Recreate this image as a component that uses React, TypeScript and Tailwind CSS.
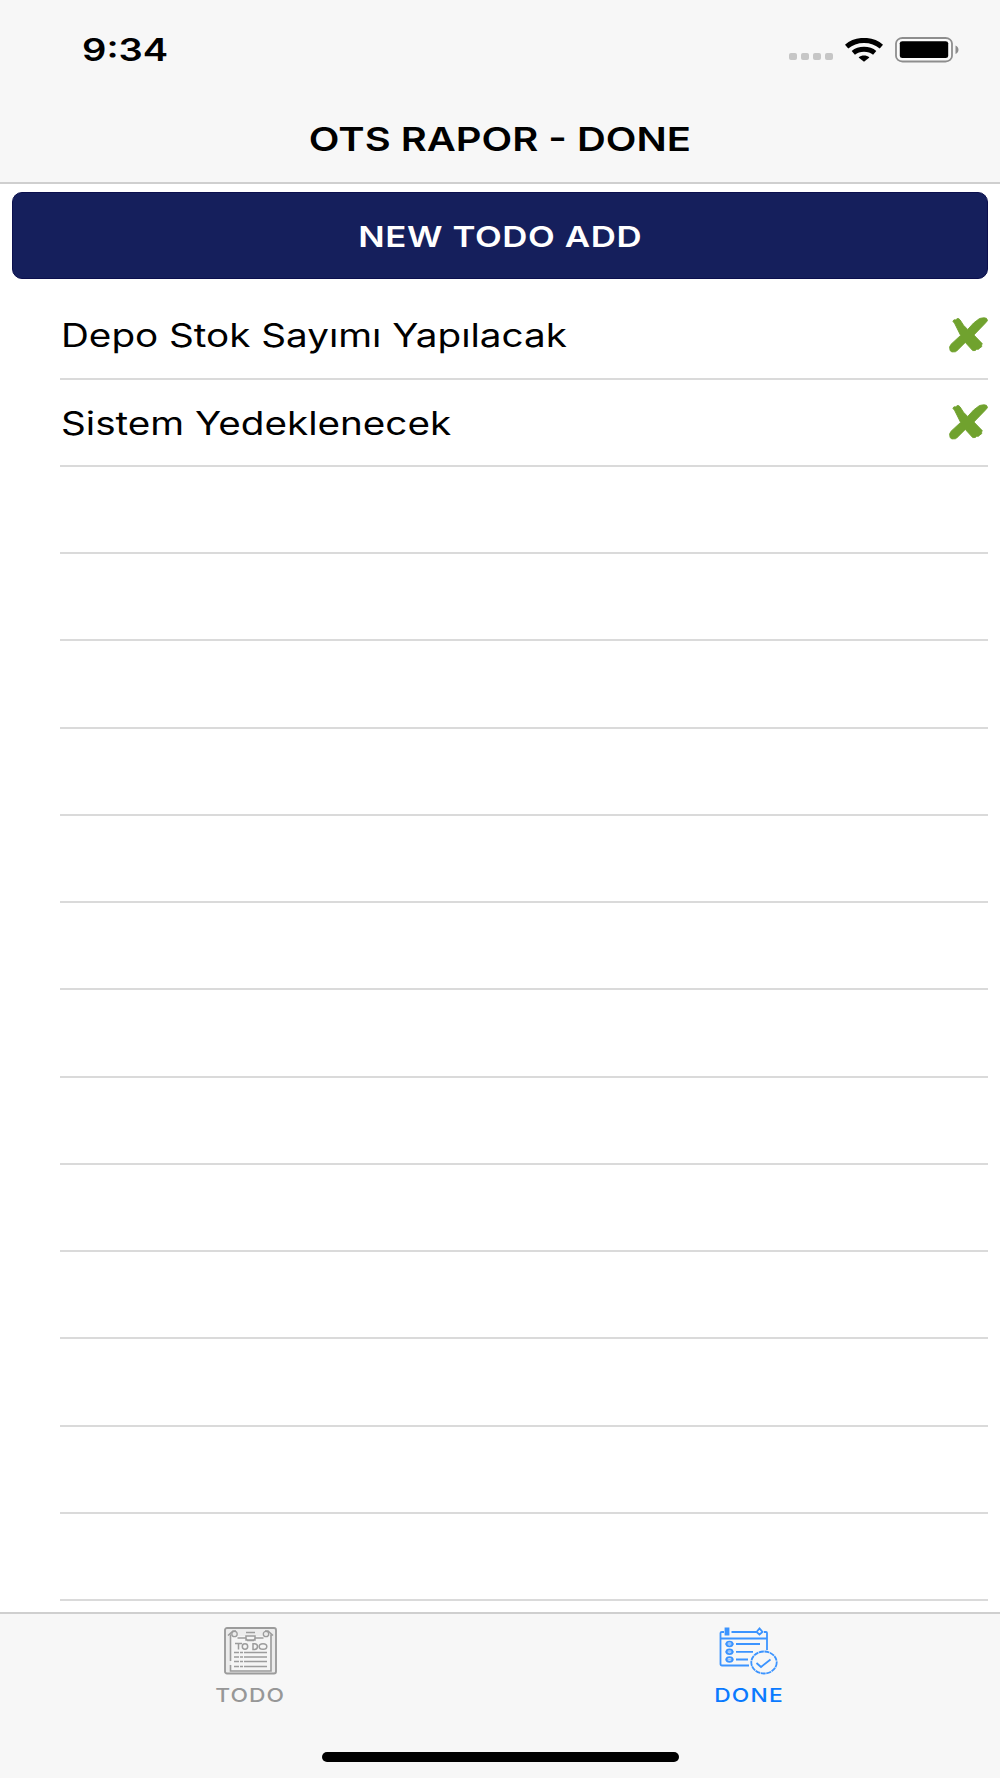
const todos = ["Depo Stok Sayımı Yapılacak", "Sistem Yedeklenecek"];
const ROW_COUNT = 15;

function WifiIcon() {
  return (
    <svg width="38" height="24" viewBox="0 0 38 24" fill="none" stroke="#000" strokeWidth="5">
      <path d="M1.6 8.6C11 .3 27 .3 36.400 8.600" />
      <path d="M8.300 14.800C14 10 24 10 29.700 14.800" />
      <path d="M19 23.800l-5.400-4.300c3-2.600 7.800-2.600 10.800 0z" fill="#000" stroke="none" />
    </svg>
  );
}

function BatteryIcon() {
  return (
    <svg width="65" height="26" viewBox="0 0 65 26">
      <rect x="1" y="1" width="56" height="23.500" rx="6.500" ry="5.500" fill="#fbfbfb" stroke="#8e8e8e" strokeWidth="1.800" />
      <rect x="4.800" y="4.300" width="48.400" height="16.600" rx="2.600" ry="2" />
      <path d="M60.500 8.600c4 1.400 4 7 0 8.400z" fill="#8e8e8e" />
    </svg>
  );
}

function CrossIcon() {
  return (
    <svg width="39" height="36" viewBox="0 0 39 36" fill="#70a22e" stroke="#70a22e" strokeWidth=".9" strokeLinejoin="round">
      <path d="M3.800 4l1.400-1.200 1.500.1 1.200-1.200 1.700-.1 1.400 1.200 3.500 5.400 4.200 4.300L24.600 6l5.900-4.500 2.600-.5 2-.2 2.300.5 1.200 2.200-2.300 2.700L24.900 18l8.300 8.600-.6 1.600.2 1.400-2.300 1.600-.8 1-2 .1-1.500 1.200-2.500.1-7.400-8.200-8.600 8.600-1.400.8-3.400.1-1.800-1.300-.5-3.600 1.500-2.800L11.600 18.400 5.800 6.800z" />
    </svg>
  );
}

function TodoIcon() {
  return (
    <svg width="53" height="48" viewBox="0 0 53 48" fill="none" stroke="#9c9c9c" strokeWidth="1.300">
      <rect x="1" y="1" width="51" height="45.500" rx="2" fill="#ececec" strokeWidth="1.900" />
      <path d="M7 9h39v34H7z" fill="#f5f5f5" stroke="none" />
      <path d="M6.500 34V7.500M6.500 38v6h40.500V7.500M4 8.500l5-4.500h3M49 8.500l-5-4.500h-3" strokeWidth="1.600" />
      <path d="M13.500 11h8l2 2.500h6l2-2.500h8M22 5.500h9M22 9h9v4h-9z" strokeWidth="1.500" />
      <circle cx="10.500" cy="7" r="2.700" />
      <circle cx="42" cy="7" r="2.700" />
      <path d="M11 16.500h7M14.500 16.500v6" strokeWidth="1.500" />
      <circle cx="21" cy="19.500" r="2.700" strokeWidth="1.500" />
      <path d="M29 16.700v5.700h1.500c4 0 4-5.700 0-5.700z" strokeWidth="1.500" />
      <ellipse cx="39" cy="19.500" rx="3.800" ry="2.800" strokeWidth="1.500" />
      <path d="M10 25.500h33M10 30h33M10 34.500h33M10 39.500h33" strokeDasharray="5 1 3 1 40" strokeWidth="1.500" />
    </svg>
  );
}

function DoneIcon() {
  return (
    <svg width="59" height="48" viewBox="0 0 59 48" fill="none" stroke="#3c94ff" strokeWidth="1.800">
      <path d="M30 38.500H3Q1.500 38.500 1.500 37V6Q1.500 5 3 5h2M12.500 5h25M45 5h2Q48 5 48 6v17" />
      <path d="M1.500 11.500H48" />
      <path d="M6.500 1.500h3v6h-3z" fill="#3c94ff" />
      <path d="M37.500 5l3-3.500 3 3.500-3 2.500z" />
      <ellipse cx="10.500" cy="17" rx="3" ry="2.300" />
      <ellipse cx="10.500" cy="24.800" rx="3" ry="2.300" />
      <ellipse cx="10.500" cy="32.500" rx="3" ry="2.300" />
      <path d="M6 17h9M6 24.800h9M6 32.500h9" strokeOpacity=".5" />
      <path d="M17 17h24M17 24.800h17M17 32.500h12" />
      <ellipse cx="45" cy="35.500" rx="12.700" ry="11" strokeDasharray="5 .6" />
      <path d="M37.500 36l4.500 4 9.500-7.500" />
    </svg>
  );
}

export default function App() {
  return (
    <div className="flex h-[1778px] w-[1000px] flex-col overflow-hidden bg-white font-['Inter',sans-serif] text-black">
      <header className="h-[184px] shrink-0 border-b-2 border-[#cfcfcf] bg-[#f7f7f7]">
        <div className="flex h-[99px] items-center justify-between pr-[40px] pl-[82px]">
          <span className="origin-left scale-x-[1.23] pt-px text-[31px] font-semibold">9:34</span>
          <div className="flex items-center">
            <div className="mt-[14px] mr-[12px] flex gap-[4px]">
              {[0, 1, 2, 3].map((dot) => (
                <span key={dot} className="h-[7px] w-[8px] rounded-[2px] bg-[#c6c6c6]" />
              ))}
            </div>
            <WifiIcon />
            <div className="ml-[12px]">
              <BatteryIcon />
            </div>
          </div>
        </div>
        <h1 className="flex h-[82px] items-center justify-center text-[33px] font-semibold">
          <span className="scale-x-[1.21] whitespace-nowrap">OTS RAPOR - DONE</span>
        </h1>
      </header>

      <main className="h-[1428px] shrink-0 overflow-hidden pt-[8px]">
        <button className="mx-[12px] flex h-[87px] w-[976px] items-center justify-center rounded-[10px] border border-[#0b0f4d] bg-[#151f5c] pt-[2px] text-[29px] font-semibold text-white">
          <span className="scale-x-[1.2] tracking-[0.5px] whitespace-nowrap">NEW TODO ADD</span>
        </button>
        <ul className="mt-[13.3px] mr-[12px] ml-[60px]">
          {Array.from({ length: ROW_COUNT }, (_, i) => (
            <li key={i} className="flex h-[87.28px] items-center justify-between border-b-2 border-[#dadada] pl-px">
              {todos[i] && (
                <>
                  <span className="origin-left scale-x-[1.207] pt-[3px] text-[32px] whitespace-nowrap">{todos[i]}</span>
                  <CrossIcon />
                </>
              )}
            </li>
          ))}
        </ul>
      </main>

      <footer className="flex flex-1 flex-col items-center border-t-2 border-[#cfcfcf] bg-[#f7f7f7]">
        <nav className="grid h-[138px] w-full grid-cols-2 text-[19px] font-medium">
          <div className="flex flex-col items-center pt-[13px] text-[#979797]">
            <TodoIcon />
            <span className="mt-[7px] scale-x-[1.2] tracking-[0.9px]">TODO</span>
          </div>
          <div className="flex flex-col items-center pt-[13px] pr-[3px] text-[#0a7aff]">
            <DoneIcon />
            <span className="mt-[7px] ml-px scale-x-[1.2] tracking-[1px]">DONE</span>
          </div>
        </nav>
        <div className="h-[10px] w-[357px] rounded-full bg-black" />
      </footer>
    </div>
  );
}
